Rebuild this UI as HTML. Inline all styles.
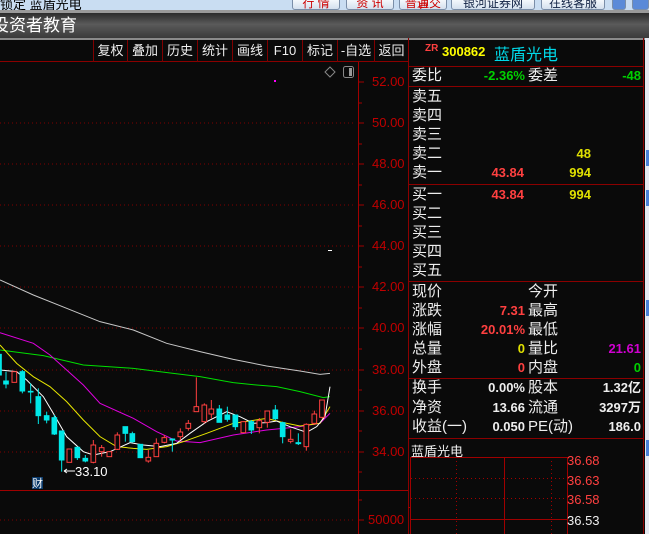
<!DOCTYPE html>
<html><head><meta charset="utf-8"><style>
*{margin:0;padding:0;box-sizing:border-box}
body{width:649px;height:534px;overflow:hidden;background:#0a0a0a;font-family:"Liberation Sans","Noto Sans CJK SC",sans-serif;position:relative;color:#fff}
.a{position:absolute;white-space:nowrap}
.btn{position:absolute;top:0;height:10px;border:1px solid #7a8ea8;border-top:none;border-radius:0 0 3px 3px;background:linear-gradient(#f4f8fc,#d4e0ee);font-size:12px;line-height:6px;overflow:hidden;text-align:center;color:#c00}
.tb{position:absolute;top:40px;height:22px;border-right:1px solid #800000;font-size:13px;line-height:22px;text-align:center;color:#eee}
.lab{position:absolute;left:412px;font-size:15px;color:#eee;line-height:18px}
.l2{position:absolute;left:528px;font-size:15px;color:#eee;line-height:18px}
.v{position:absolute;font-size:13px;font-weight:bold;line-height:18px;text-align:right}
.hl{position:absolute;height:1px;background:#8b0000}
.ax{position:absolute;left:372px;font-size:13px;color:#c00000;line-height:14px}
</style></head><body>
<div class="a" style="left:0;top:0;width:649px;height:10px;background:#c9ddf2"></div>
<div class="a" style="left:0;top:-6px;font-size:13px;color:#000">锁定 蓝盾光电</div>
<div class="btn" style="left:292px;width:48px">行 情</div>
<div class="btn" style="left:346px;width:48px">资 讯</div>
<div class="btn" style="left:399px;width:48px">普通交易</div>
<div class="btn" style="left:451px;width:84px;color:#124">银河证券网</div>
<div class="btn" style="left:541px;width:64px;color:#124">在线客服</div>
<div class="btn" style="left:612px;width:14px;background:#5a8ad8"></div>
<div class="btn" style="left:632px;width:17px;background:#5a8ad8"></div>
<div class="a" style="left:0;top:10px;width:649px;height:3px;background:#9a9a9a"></div>
<div class="a" style="left:0;top:13px;width:649px;height:25px;background:linear-gradient(#2c2c2c,#5a5a5a 45%,#3a3a3a)"></div>
<div class="a" style="left:-8px;top:13px;font-size:17px;line-height:25px;color:#fff">投资者教育</div>
<div class="a" style="left:0;top:38px;width:649px;height:2px;background:#8a8a8a"></div>
<div class="a" style="left:645px;top:38px;width:4px;height:496px;background:#e4e8f0"></div>
<div class="a" style="left:646px;top:150px;width:3px;height:16px;background:#4a80d8"></div>
<div class="a" style="left:646px;top:190px;width:3px;height:16px;background:#4a80d8"></div>
<div class="a" style="left:646px;top:300px;width:3px;height:16px;background:#4a80d8"></div>
<div class="a" style="left:646px;top:440px;width:3px;height:16px;background:#4a80d8"></div>
<div class="hl" style="left:0;top:61px;width:408px"></div>
<div class="tb" style="left:93px;width:35px;border-left:1px solid #800000">复权</div>
<div class="tb" style="left:128px;width:35px">叠加</div>
<div class="tb" style="left:163px;width:35px">历史</div>
<div class="tb" style="left:198px;width:35px">统计</div>
<div class="tb" style="left:233px;width:35px">画线</div>
<div class="tb" style="left:268px;width:35px">F10</div>
<div class="tb" style="left:303px;width:35px">标记</div>
<div class="tb" style="left:338px;width:37px">-自选</div>
<div class="tb" style="left:375px;width:34px">返回</div>
<div class="a" style="left:408px;top:38px;width:1px;height:496px;background:#8b0000"></div>
<div class="a" style="left:643px;top:38px;width:1px;height:496px;background:#8b0000"></div>

<svg class="a" style="left:0;top:0" width="408" height="534">
<g stroke="#800000" stroke-dasharray="1 3">
<line x1="0" y1="123" x2="356" y2="123"/><line x1="0" y1="164" x2="356" y2="164"/><line x1="0" y1="205" x2="356" y2="205"/><line x1="0" y1="246" x2="356" y2="246"/><line x1="0" y1="287" x2="356" y2="287"/><line x1="0" y1="328" x2="356" y2="328"/><line x1="0" y1="370" x2="356" y2="370"/><line x1="0" y1="411" x2="356" y2="411"/><line x1="0" y1="452" x2="356" y2="452"/><line x1="0" y1="520" x2="356" y2="520"/>
</g>
<line x1="358.5" y1="62" x2="358.5" y2="534" stroke="#a00000"/>
<line x1="0" y1="490.5" x2="408" y2="490.5" stroke="#a00000"/>
<g stroke="#a00000">
<line x1="359" y1="82" x2="364" y2="82"/><line x1="359" y1="103" x2="362" y2="103"/><line x1="359" y1="123" x2="364" y2="123"/><line x1="359" y1="144" x2="362" y2="144"/><line x1="359" y1="164" x2="364" y2="164"/><line x1="359" y1="185" x2="362" y2="185"/><line x1="359" y1="205" x2="364" y2="205"/><line x1="359" y1="226" x2="362" y2="226"/><line x1="359" y1="246" x2="364" y2="246"/><line x1="359" y1="267" x2="362" y2="267"/><line x1="359" y1="287" x2="364" y2="287"/><line x1="359" y1="308" x2="362" y2="308"/><line x1="359" y1="328" x2="364" y2="328"/><line x1="359" y1="349" x2="362" y2="349"/><line x1="359" y1="370" x2="364" y2="370"/><line x1="359" y1="390" x2="362" y2="390"/><line x1="359" y1="411" x2="364" y2="411"/><line x1="359" y1="431" x2="362" y2="431"/><line x1="359" y1="452" x2="364" y2="452"/><line x1="359" y1="472" x2="362" y2="472"/><line x1="359" y1="500" x2="362" y2="500"/><line x1="359" y1="520" x2="364" y2="520"/>
</g>
<path d="M330 67 L335 72 L330 77 L325 72Z" fill="none" stroke="#888"/>
<rect x="343.5" y="66.5" width="10" height="11" rx="2" fill="none" stroke="#888"/><rect x="349" y="68" width="3" height="8" fill="#999"/>
<rect x="274" y="80" width="2" height="2" fill="#f0f"/>
<rect x="328" y="250" width="4" height="1" fill="#fff"/>
<g transform="translate(0,260) scale(0.33333)" fill="none" stroke-width="3">
<polyline stroke="#c8c8c8" points="0,60 100,105 200,145 300,185 400,210 500,250 600,275 700,298 800,318 900,333 960,343 990,340"/>
<polyline stroke="#00e000" points="0,270 130,287 250,315 400,325 520,340 600,350 700,368 770,375 830,380 900,395 970,413 990,410"/>
<polyline stroke="#e000e0" points="0,218 100,250 150,285 200,330 250,375 300,430 400,475 470,515 530,543 600,548 700,525 800,510 850,505 900,500 960,490 990,460"/>
<polyline stroke="#e8e800" points="0,255 50,310 100,350 150,380 200,425 250,480 300,530 350,560 400,565 440,568 500,560 550,545 620,520 700,490 800,475 850,488 900,498 960,490 990,440"/>
<polyline stroke="#fff" points="0,330 50,335 80,360 130,410 160,460 200,530 250,575 280,585 330,575 390,548 430,555 480,560 530,550 570,520 620,485 680,455 720,470 760,490 800,488 830,483 870,500 920,517 950,500 975,470 990,380"/>
<g stroke="#00e8e8" fill="#00e8e8">
<rect x="-4" y="283" width="8" height="62"/>
<line x1="18" y1="335" x2="18" y2="385"/><rect x="11" y="363" width="14" height="9"/>
<line x1="67" y1="330" x2="67" y2="400"/><rect x="60" y="335" width="14" height="58"/>
<line x1="92" y1="370" x2="92" y2="430"/><rect x="85" y="394" width="14" height="2"/>
<line x1="115" y1="385" x2="115" y2="492"/><rect x="108" y="410" width="14" height="57"/>
<line x1="140" y1="455" x2="140" y2="490"/><rect x="133" y="467" width="14" height="13"/>
<line x1="163" y1="465" x2="163" y2="525"/><rect x="156" y="473" width="14" height="49"/>
<line x1="185" y1="513" x2="185" y2="635"/><rect x="178" y="513" width="14" height="87"/>
<line x1="232" y1="560" x2="232" y2="600"/><rect x="225" y="562" width="14" height="31"/>
<line x1="256" y1="585" x2="256" y2="607"/><rect x="249" y="595" width="14" height="8"/>
<line x1="376" y1="500" x2="376" y2="545"/><rect x="369" y="500" width="14" height="20"/>
<line x1="397" y1="515" x2="397" y2="548"/><rect x="390" y="521" width="14" height="24"/>
<rect x="414" y="553" width="14" height="40"/>
<line x1="517" y1="535" x2="517" y2="575"/><rect x="510" y="537" width="14" height="3"/>
<line x1="658" y1="435" x2="658" y2="487"/><rect x="651" y="447" width="14" height="40"/>
<line x1="682" y1="440" x2="682" y2="485"/><rect x="675" y="465" width="14" height="13"/>
<line x1="706" y1="465" x2="706" y2="510"/><rect x="699" y="465" width="14" height="35"/>
<line x1="754" y1="480" x2="754" y2="522"/><rect x="747" y="485" width="14" height="25"/>
<line x1="826" y1="435" x2="826" y2="480"/><rect x="819" y="450" width="14" height="26"/>
<line x1="848" y1="485" x2="848" y2="550"/><rect x="841" y="488" width="14" height="42"/>
<line x1="895" y1="520" x2="895" y2="555"/><rect x="888" y="548" width="14" height="3"/>
</g>
<g stroke="#ff4040" fill="#0a0a0a">
<rect x="36" y="335" width="14" height="32"/>
<rect x="201" y="567" width="14" height="40"/>
<line x1="280" y1="540" x2="280" y2="610"/><rect x="273" y="555" width="14" height="52"/>
<line x1="305" y1="555" x2="305" y2="590"/><rect x="298" y="563" width="14" height="12"/>
<rect x="321" y="575" width="14" height="15"/>
<line x1="352" y1="517" x2="352" y2="570"/><rect x="345" y="525" width="14" height="43"/>
<line x1="445" y1="570" x2="445" y2="608"/><rect x="438" y="592" width="14" height="11"/>
<line x1="469" y1="535" x2="469" y2="590"/><rect x="462" y="550" width="14" height="40"/>
<line x1="493" y1="525" x2="493" y2="550"/><rect x="486" y="533" width="14" height="14"/>
<line x1="541" y1="505" x2="541" y2="540"/><rect x="534" y="516" width="14" height="14"/>
<line x1="565" y1="480" x2="565" y2="512"/><rect x="558" y="490" width="14" height="15"/>
<line x1="589" y1="352" x2="589" y2="455"/><rect x="582" y="440" width="14" height="15"/>
<line x1="613" y1="430" x2="613" y2="490"/><rect x="606" y="435" width="14" height="50"/>
<line x1="634" y1="420" x2="634" y2="475"/><rect x="627" y="447" width="14" height="15"/>
<rect x="723" y="485" width="14" height="33"/>
<line x1="778" y1="474" x2="778" y2="520"/><rect x="771" y="482" width="14" height="21"/>
<line x1="802" y1="453" x2="802" y2="503"/><rect x="795" y="453" width="14" height="34"/>
<line x1="872" y1="508" x2="872" y2="550"/><rect x="865" y="538" width="14" height="6"/>
<line x1="919" y1="490" x2="919" y2="572"/><rect x="912" y="493" width="14" height="67"/>
<line x1="943" y1="452" x2="943" y2="495"/><rect x="936" y="462" width="14" height="28"/>
<line x1="966" y1="420" x2="966" y2="475"/><rect x="959" y="420" width="14" height="52"/>
</g>
</g>
<path d="M64 471 H75 M64 471 l3 -2 M64 471 l3 2" stroke="#fff" fill="none"/>
<text x="75" y="476" fill="#fff" font-size="13" font-family="Liberation Sans">33.10</text>
<rect x="32" y="477" width="11" height="12" fill="#0b3a6a"/>
<text x="32" y="487" fill="#fff" font-size="11" font-family="Noto Sans CJK SC">财</text>
</svg>
<div class="ax" style="top:75px">52.00</div>
<div class="ax" style="top:116px">50.00</div>
<div class="ax" style="top:157px">48.00</div>
<div class="ax" style="top:198px">46.00</div>
<div class="ax" style="top:239px">44.00</div>
<div class="ax" style="top:280px">42.00</div>
<div class="ax" style="top:321px">40.00</div>
<div class="ax" style="top:363px">38.00</div>
<div class="ax" style="top:404px">36.00</div>
<div class="ax" style="top:445px">34.00</div>
<div class="ax" style="top:513px;left:368px">50000</div>

<div class="a" style="left:425px;top:43px;font-size:10px;font-weight:bold;color:#ff4040">ZR</div>
<div class="a" style="left:442px;top:44px;font-size:13px;font-weight:bold;color:#ffff00">300862</div>
<div class="a" style="left:494px;top:41px;font-size:16px;color:#00d8e8">蓝盾光电</div>
<div class="hl" style="left:408px;top:66px;width:236px"></div>
<div class="lab" style="top:67px">委比</div>
<div class="v" style="left:450px;width:75px;top:67px;color:#00d000">-2.36%</div>
<div class="l2" style="top:67px">委差</div>
<div class="v" style="left:590px;width:51px;top:67px;color:#00d000">-48</div>
<div class="hl" style="left:408px;top:86px;width:236px"></div>
<div class="lab" style="top:88px">卖五</div>
<div class="lab" style="top:107px">卖四</div>
<div class="lab" style="top:126px">卖三</div>
<div class="lab" style="top:145px">卖二</div>
<div class="v" style="left:540px;width:51px;top:145px;color:#e0e000">48</div>
<div class="lab" style="top:164px">卖一</div>
<div class="v" style="left:460px;width:64px;top:164px;color:#ff4040">43.84</div>
<div class="v" style="left:540px;width:51px;top:164px;color:#e0e000">994</div>
<div class="hl" style="left:408px;top:184px;width:236px"></div>
<div class="lab" style="top:186px">买一</div>
<div class="v" style="left:460px;width:64px;top:186px;color:#ff4040">43.84</div>
<div class="v" style="left:540px;width:51px;top:186px;color:#e0e000">994</div>
<div class="lab" style="top:205px">买二</div>
<div class="lab" style="top:224px">买三</div>
<div class="lab" style="top:243px">买四</div>
<div class="lab" style="top:262px">买五</div>
<div class="hl" style="left:408px;top:281px;width:236px"></div>
<div class="lab" style="top:283px">现价</div><div class="l2" style="top:283px">今开</div>
<div class="lab" style="top:302px">涨跌</div><div class="v" style="left:460px;width:65px;top:302px;color:#ff4040">7.31</div><div class="l2" style="top:302px">最高</div>
<div class="lab" style="top:321px">涨幅</div><div class="v" style="left:460px;width:65px;top:321px;color:#ff4040">20.01%</div><div class="l2" style="top:321px">最低</div>
<div class="lab" style="top:340px">总量</div><div class="v" style="left:460px;width:65px;top:340px;color:#e0e000">0</div><div class="l2" style="top:340px">量比</div><div class="v" style="left:580px;width:61px;top:340px;color:#d000d0">21.61</div>
<div class="lab" style="top:359px">外盘</div><div class="v" style="left:460px;width:65px;top:359px;color:#ff4040">0</div><div class="l2" style="top:359px">内盘</div><div class="v" style="left:580px;width:61px;top:359px;color:#00d000">0</div>
<div class="hl" style="left:408px;top:378px;width:236px"></div>
<div class="lab" style="top:379px">换手</div><div class="v" style="left:450px;width:75px;top:379px;color:#eee">0.00%</div><div class="l2" style="top:379px">股本</div><div class="v" style="left:570px;width:71px;top:379px;color:#eee">1.32亿</div>
<div class="lab" style="top:399px">净资</div><div class="v" style="left:450px;width:75px;top:399px;color:#eee">13.66</div><div class="l2" style="top:399px">流通</div><div class="v" style="left:570px;width:71px;top:399px;color:#eee">3297万</div>
<div class="lab" style="top:418px">收益(一)</div><div class="v" style="left:450px;width:75px;top:418px;color:#eee">0.050</div><div class="l2" style="top:418px">PE(动)</div><div class="v" style="left:570px;width:71px;top:418px;color:#eee">186.0</div>
<div class="hl" style="left:408px;top:438px;width:236px"></div>
<div class="a" style="left:411px;top:441px;font-size:13px;color:#eee">蓝盾光电</div>
<svg class="a" style="left:408px;top:457px" width="236" height="77">
<rect x="2.5" y="0.5" width="157" height="80" fill="none" stroke="#a00000"/>
<g stroke="#a00000"><line x1="48.5" y1="0" x2="48.5" y2="77" stroke-dasharray="1 3"/><line x1="96.5" y1="0" x2="96.5" y2="77"/><line x1="143.5" y1="0" x2="143.5" y2="77" stroke-dasharray="1 3"/><line x1="3" y1="21.5" x2="160" y2="21.5" stroke-dasharray="1 3"/><line x1="3" y1="41.5" x2="160" y2="41.5" stroke-dasharray="1 3"/><line x1="3" y1="62.5" x2="160" y2="62.5"/><line x1="0" y1="50.5" x2="3" y2="50.5"/></g>
</svg>
<div class="a" style="left:567px;top:453px;font-size:13px;color:#ff4040">36.68</div>
<div class="a" style="left:567px;top:473px;font-size:13px;color:#ff4040">36.63</div>
<div class="a" style="left:567px;top:492px;font-size:13px;color:#ff4040">36.58</div>
<div class="a" style="left:567px;top:513px;font-size:13px;color:#eee">36.53</div>
</body></html>
